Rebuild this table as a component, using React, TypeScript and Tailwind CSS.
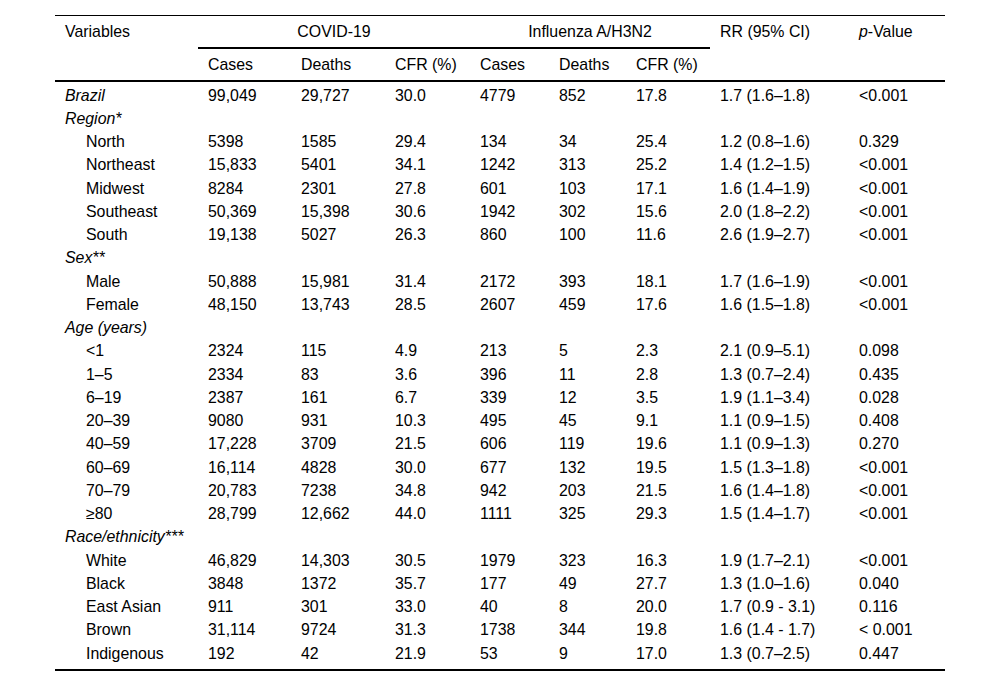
import React from "react";

type Row = {
    label: string;
    head?: boolean;
    indent?: boolean;
    values?: string[];
};

const ROWS: Row[] = [
    { label: "Brazil", head: true, values: ["99,049", "29,727", "30.0", "4779", "852", "17.8", "1.7 (1.6–1.8)", "<0.001"] },
    { label: "Region*", head: true },
    { label: "North", indent: true, values: ["5398", "1585", "29.4", "134", "34", "25.4", "1.2 (0.8–1.6)", "0.329"] },
    { label: "Northeast", indent: true, values: ["15,833", "5401", "34.1", "1242", "313", "25.2", "1.4 (1.2–1.5)", "<0.001"] },
    { label: "Midwest", indent: true, values: ["8284", "2301", "27.8", "601", "103", "17.1", "1.6 (1.4–1.9)", "<0.001"] },
    { label: "Southeast", indent: true, values: ["50,369", "15,398", "30.6", "1942", "302", "15.6", "2.0 (1.8–2.2)", "<0.001"] },
    { label: "South", indent: true, values: ["19,138", "5027", "26.3", "860", "100", "11.6", "2.6 (1.9–2.7)", "<0.001"] },
    { label: "Sex**", head: true },
    { label: "Male", indent: true, values: ["50,888", "15,981", "31.4", "2172", "393", "18.1", "1.7 (1.6–1.9)", "<0.001"] },
    { label: "Female", indent: true, values: ["48,150", "13,743", "28.5", "2607", "459", "17.6", "1.6 (1.5–1.8)", "<0.001"] },
    { label: "Age (years)", head: true },
    { label: "<1", indent: true, values: ["2324", "115", "4.9", "213", "5", "2.3", "2.1 (0.9–5.1)", "0.098"] },
    { label: "1–5", indent: true, values: ["2334", "83", "3.6", "396", "11", "2.8", "1.3 (0.7–2.4)", "0.435"] },
    { label: "6–19", indent: true, values: ["2387", "161", "6.7", "339", "12", "3.5", "1.9 (1.1–3.4)", "0.028"] },
    { label: "20–39", indent: true, values: ["9080", "931", "10.3", "495", "45", "9.1", "1.1 (0.9–1.5)", "0.408"] },
    { label: "40–59", indent: true, values: ["17,228", "3709", "21.5", "606", "119", "19.6", "1.1 (0.9–1.3)", "0.270"] },
    { label: "60–69", indent: true, values: ["16,114", "4828", "30.0", "677", "132", "19.5", "1.5 (1.3–1.8)", "<0.001"] },
    { label: "70–79", indent: true, values: ["20,783", "7238", "34.8", "942", "203", "21.5", "1.6 (1.4–1.8)", "<0.001"] },
    { label: "≥80", indent: true, values: ["28,799", "12,662", "44.0", "1111", "325", "29.3", "1.5 (1.4–1.7)", "<0.001"] },
    { label: "Race/ethnicity***", head: true },
    { label: "White", indent: true, values: ["46,829", "14,303", "30.5", "1979", "323", "16.3", "1.9 (1.7–2.1)", "<0.001"] },
    { label: "Black", indent: true, values: ["3848", "1372", "35.7", "177", "49", "27.7", "1.3 (1.0–1.6)", "0.040"] },
    { label: "East Asian", indent: true, values: ["911", "301", "33.0", "40", "8", "20.0", "1.7 (0.9 - 3.1)", "0.116"] },
    { label: "Brown", indent: true, values: ["31,114", "9724", "31.3", "1738", "344", "19.8", "1.6 (1.4 - 1.7)", "< 0.001"] },
    { label: "Indigenous", indent: true, values: ["192", "42", "21.9", "53", "9", "17.0", "1.3 (0.7–2.5)", "0.447"] },
];

const COL_WIDTHS = ["w-[143px]", "w-[93px]", "w-[94px]", "w-[85px]", "w-[79px]", "w-[77px]", "w-[84px]", "w-[139px]", "w-[96px]"];

const App = () => {
    return (
        <div className="min-h-screen bg-white pt-[15px] text-black font-['Liberation_Sans',Arial,sans-serif] text-[15.9px]">
            <table className="mx-auto w-[890px] table-fixed border-separate border-spacing-0 text-left">
                <colgroup>
                    {COL_WIDTHS.map((w, i) => (
                        <col key={i} className={w} />
                    ))}
                </colgroup>
                <thead>
                    <tr>
                        {/* Variables */}
                        <th rowSpan={2} className="border-t border-b-2 border-black pl-[10px] align-top font-normal leading-[31px]">
                            Variables
                        </th>
                        <th colSpan={3} className="border-t border-b-2 border-black text-center font-normal leading-[31px]">
                            COVID-19
                        </th>
                        <th colSpan={3} className="border-t border-b-2 border-black text-center font-normal leading-[31px]">
                            Influenza A/H3N2
                        </th>
                        <th rowSpan={2} className="border-t border-b-2 border-black pl-[10px] align-top font-normal leading-[31px]">
                            RR (95% CI)
                        </th>
                        <th rowSpan={2} className="border-t border-b-2 border-black pl-[10px] align-top font-normal leading-[31px]">
                            <span className="italic">p</span>-Value
                        </th>
                    </tr>
                    <tr>
                        {["Cases", "Deaths", "CFR (%)", "Cases", "Deaths", "CFR (%)"].map((h, i) => (
                            <th key={i} className="border-b-2 border-black pl-[10px] font-normal leading-[31px]">
                                {h}
                            </th>
                        ))}
                    </tr>
                </thead>
                <tbody>
                    {ROWS.map((row, idx) => {
                        const first = idx === 0;
                        const last = idx === ROWS.length - 1;
                        const cell = `leading-[23.25px] whitespace-nowrap ${first ? "pt-[1.5px]" : ""} ${last ? "pb-[4px] border-b-2 border-black" : ""}`;
                        return (
                            <tr key={idx}>
                                <td className={`${cell} ${row.indent ? "pl-[31px]" : "pl-[10px]"} ${row.head ? "italic" : ""}`}>
                                    {row.label}
                                </td>
                                {Array.from({ length: 8 }).map((_, i) => (
                                    <td key={i} className={`${cell} pl-[10px]`}>
                                        {row.values ? row.values[i] : ""}
                                    </td>
                                ))}
                            </tr>
                        );
                    })}
                </tbody>
            </table>
        </div>
    );
};

export default App;
